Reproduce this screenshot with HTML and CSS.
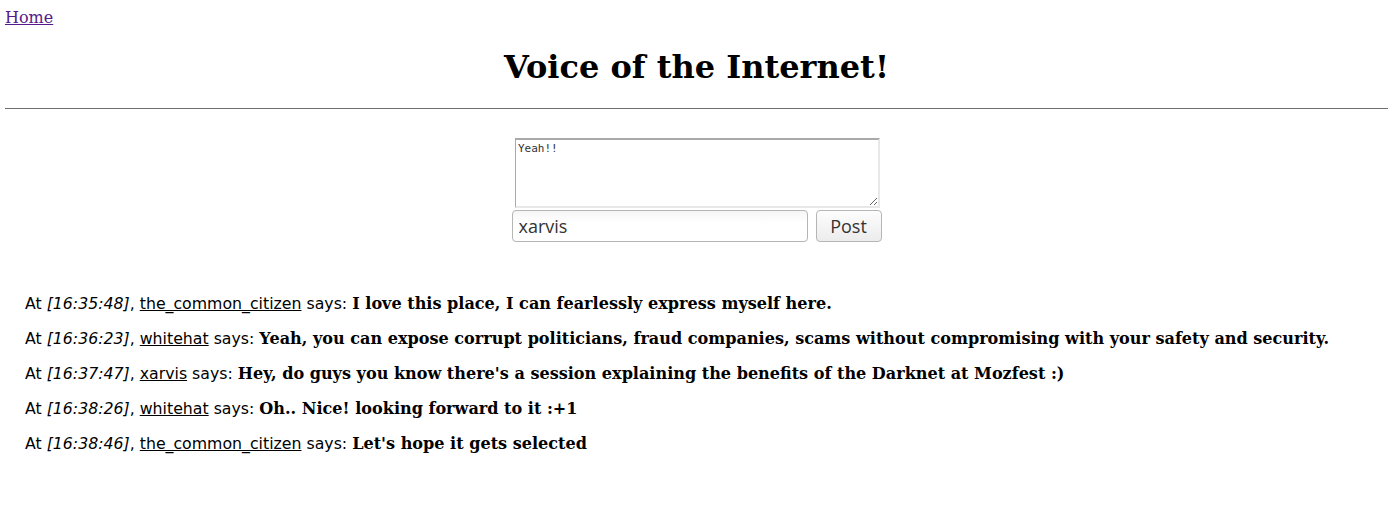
FILE: index.html
```html
<!DOCTYPE html>
<html>
<head>
<meta charset="utf-8">
<title>Voice of the Internet!</title>
<link rel="stylesheet" href="styles.css">
</head>
<body>
<a class="home" href="#">Home</a>
<h1 class="title">Voice of the Internet!</h1>
<hr class="rule">
<form class="post-form">
  <textarea class="msg-box">Yeah!!</textarea>
  <div class="post-row">
    <input class="name-box" type="text" value="xarvis">
    <button class="post-btn" type="button">Post</button>
  </div>
</form>
<div class="messages">
  <p class="msg"><span class="sans">At </span><em class="time">[16:35:48]</em><span class="sans">, </span><a class="user" href="#">the_common_citizen</a><span class="sans"> says: </span><b class="text">I love this place, I can fearlessly express myself here.</b></p>
  <p class="msg"><span class="sans">At </span><em class="time">[16:36:23]</em><span class="sans">, </span><a class="user" href="#">whitehat</a><span class="sans"> says: </span><b class="text">Yeah, you can expose corrupt politicians, fraud companies, scams without compromising with your safety and security.</b></p>
  <p class="msg"><span class="sans">At </span><em class="time">[16:37:47]</em><span class="sans">, </span><a class="user" href="#">xarvis</a><span class="sans"> says: </span><b class="text">Hey, do guys you know there's a session explaining the benefits of the Darknet at Mozfest :)</b></p>
  <p class="msg"><span class="sans">At </span><em class="time">[16:38:26]</em><span class="sans">, </span><a class="user" href="#">whitehat</a><span class="sans"> says: </span><b class="text">Oh.. Nice! looking forward to it :+1</b></p>
  <p class="msg"><span class="sans">At </span><em class="time">[16:38:46]</em><span class="sans">, </span><a class="user" href="#">the_common_citizen</a><span class="sans"> says: </span><b class="text">Let's hope it gets selected</b></p>
</div>
</body>
</html>
```
FILE: styles.css
```css
body {
  margin: 8px 3px 5px 5px;
  font-family: "DejaVu Serif", serif;
  font-size: 16px;
  color: #000;
  background: #fff;
}
.home {
  color: #551a8b;
}
.title {
  text-align: center;
  font-size: 32px;
  font-weight: bold;
  margin: 21px 0 22px;
}
.rule {
  border: none;
  border-top: 1px solid #6e6e6e;
  margin: 0;
}
.post-form {
  display: flex;
  flex-direction: column;
  align-items: center;
  margin-top: 29px;
}
.msg-box {
  width: 365px;
  height: 70px;
  box-sizing: border-box;
  border: 2px solid #a9a9a9;
  border-right-color: #e8e8e8;
  border-bottom-color: #e8e8e8;
  border-left-width: 1px;
  font-family: "DejaVu Sans Mono", monospace;
  font-size: 11px;
  padding: 2px 2px;
  margin: 0 0 0 2px;
  resize: both;
  color: #333;
}
.post-row {
  display: flex;
  gap: 8px;
  margin-top: 2px;
}
.name-box {
  width: 296px;
  height: 32px;
  box-sizing: border-box;
  border: 1px solid #b5b5b5;
  border-radius: 4px;
  font-family: "Open Sans", sans-serif;
  font-size: 18px;
  color: #333;
  padding: 0 6px;
  background: linear-gradient(#f6f6f6, #fff 40%);
}
.post-btn {
  width: 66px;
  height: 32px;
  box-sizing: border-box;
  border: 1px solid #b5b5b5;
  border-radius: 4px;
  font-family: "Open Sans", sans-serif;
  font-size: 18px;
  color: #333;
  background: linear-gradient(#fdfdfd, #ececec);
  padding: 0;
}
.messages {
  margin-top: 52px;
  padding-left: 20px;
}
.msg {
  margin: 0 0 15px;
  line-height: 20px;
}
.sans {
  font-family: "DejaVu Sans", sans-serif;
  font-size: 15.75px;
}
.time {
  font-family: "DejaVu Sans", sans-serif;
  font-size: 15.75px;
  font-style: italic;
}
.user {
  font-family: "DejaVu Sans", sans-serif;
  font-size: 15.75px;
  color: #000;
}
.text {
  font-weight: bold;
  font-size: 16.07px;
}
```
